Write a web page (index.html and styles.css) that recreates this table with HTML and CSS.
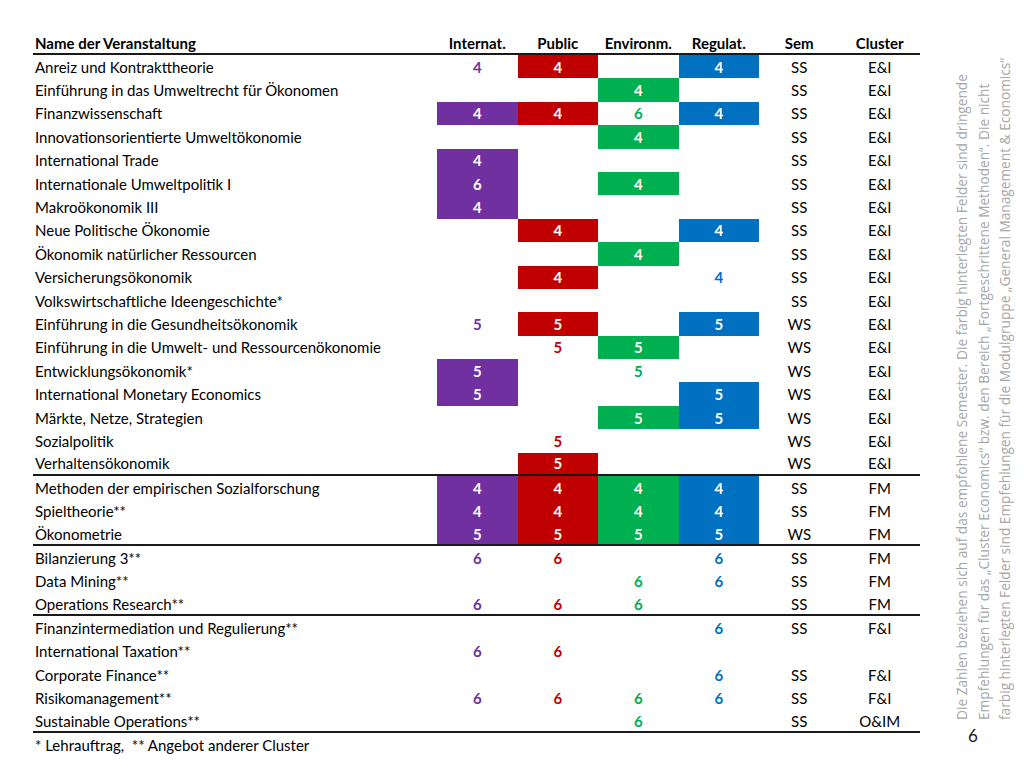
FILE: index.html
```html
<!DOCTYPE html>
<html lang="de">
<head>
<meta charset="utf-8">
<title>Veranstaltungen</title>
<link rel="stylesheet" href="styles.css">
</head>
<body>
<div class="slide">
  <div class="main">
    <div class="table">
      <div class="row head">
        <div class="name">Name der Veranstaltung</div>
        <div class="c">Internat.</div><div class="c">Public</div><div class="c">Environm.</div><div class="c">Regulat.</div><div class="c">Sem</div><div class="c">Cluster</div>
      </div>
      <div class="row"><div class="name">Anreiz und Kontrakttheorie</div><div class="c n i">4</div><div class="c n p f">4</div><div class="c"></div><div class="c n r f">4</div><div class="c">SS</div><div class="c">E&amp;I</div></div>
      <div class="row"><div class="name">Einführung in das Umweltrecht für Ökonomen</div><div class="c"></div><div class="c"></div><div class="c n e f">4</div><div class="c"></div><div class="c">SS</div><div class="c">E&amp;I</div></div>
      <div class="row"><div class="name">Finanzwissenschaft</div><div class="c n i f">4</div><div class="c n p f">4</div><div class="c n e">6</div><div class="c n r f">4</div><div class="c">SS</div><div class="c">E&amp;I</div></div>
      <div class="row"><div class="name">Innovationsorientierte Umweltökonomie</div><div class="c"></div><div class="c"></div><div class="c n e f">4</div><div class="c"></div><div class="c">SS</div><div class="c">E&amp;I</div></div>
      <div class="row"><div class="name">International Trade</div><div class="c n i f">4</div><div class="c"></div><div class="c"></div><div class="c"></div><div class="c">SS</div><div class="c">E&amp;I</div></div>
      <div class="row"><div class="name">Internationale Umweltpolitik I</div><div class="c n i f">6</div><div class="c"></div><div class="c n e f">4</div><div class="c"></div><div class="c">SS</div><div class="c">E&amp;I</div></div>
      <div class="row"><div class="name">Makroökonomik III</div><div class="c n i f">4</div><div class="c"></div><div class="c"></div><div class="c"></div><div class="c">SS</div><div class="c">E&amp;I</div></div>
      <div class="row"><div class="name">Neue Politische Ökonomie</div><div class="c"></div><div class="c n p f">4</div><div class="c"></div><div class="c n r f">4</div><div class="c">SS</div><div class="c">E&amp;I</div></div>
      <div class="row"><div class="name">Ökonomik natürlicher Ressourcen</div><div class="c"></div><div class="c"></div><div class="c n e f">4</div><div class="c"></div><div class="c">SS</div><div class="c">E&amp;I</div></div>
      <div class="row"><div class="name">Versicherungsökonomik</div><div class="c"></div><div class="c n p f">4</div><div class="c"></div><div class="c n r">4</div><div class="c">SS</div><div class="c">E&amp;I</div></div>
      <div class="row"><div class="name">Volkswirtschaftliche Ideengeschichte*</div><div class="c"></div><div class="c"></div><div class="c"></div><div class="c"></div><div class="c">SS</div><div class="c">E&amp;I</div></div>
      <div class="row"><div class="name">Einführung in die Gesundheitsökonomik</div><div class="c n i">5</div><div class="c n p f">5</div><div class="c"></div><div class="c n r f">5</div><div class="c">WS</div><div class="c">E&amp;I</div></div>
      <div class="row"><div class="name">Einführung in die Umwelt- und Ressourcenökonomie</div><div class="c"></div><div class="c n p">5</div><div class="c n e f">5</div><div class="c"></div><div class="c">WS</div><div class="c">E&amp;I</div></div>
      <div class="row"><div class="name">Entwicklungsökonomik*</div><div class="c n i f">5</div><div class="c"></div><div class="c n e">5</div><div class="c"></div><div class="c">WS</div><div class="c">E&amp;I</div></div>
      <div class="row"><div class="name">International Monetary Economics</div><div class="c n i f">5</div><div class="c"></div><div class="c"></div><div class="c n r f">5</div><div class="c">WS</div><div class="c">E&amp;I</div></div>
      <div class="row"><div class="name">Märkte, Netze, Strategien</div><div class="c"></div><div class="c"></div><div class="c n e f">5</div><div class="c n r f">5</div><div class="c">WS</div><div class="c">E&amp;I</div></div>
      <div class="row"><div class="name">Sozialpolitik</div><div class="c"></div><div class="c n p">5</div><div class="c"></div><div class="c"></div><div class="c">WS</div><div class="c">E&amp;I</div></div>
      <div class="row sep"><div class="name">Verhaltensökonomik</div><div class="c"></div><div class="c n p f">5</div><div class="c"></div><div class="c"></div><div class="c">WS</div><div class="c">E&amp;I</div></div>
      <div class="row"><div class="name">Methoden der empirischen Sozialforschung</div><div class="c n i f">4</div><div class="c n p f">4</div><div class="c n e f">4</div><div class="c n r f">4</div><div class="c">SS</div><div class="c">FM</div></div>
      <div class="row"><div class="name">Spieltheorie**</div><div class="c n i f">4</div><div class="c n p f">4</div><div class="c n e f">4</div><div class="c n r f">4</div><div class="c">SS</div><div class="c">FM</div></div>
      <div class="row sep"><div class="name">Ökonometrie</div><div class="c n i f">5</div><div class="c n p f">5</div><div class="c n e f">5</div><div class="c n r f">5</div><div class="c">WS</div><div class="c">FM</div></div>
      <div class="row"><div class="name">Bilanzierung 3**</div><div class="c n i">6</div><div class="c n p">6</div><div class="c"></div><div class="c n r">6</div><div class="c">SS</div><div class="c">FM</div></div>
      <div class="row"><div class="name">Data Mining**</div><div class="c"></div><div class="c"></div><div class="c n e">6</div><div class="c n r">6</div><div class="c">SS</div><div class="c">FM</div></div>
      <div class="row sep"><div class="name">Operations Research**</div><div class="c n i">6</div><div class="c n p">6</div><div class="c n e">6</div><div class="c"></div><div class="c">SS</div><div class="c">FM</div></div>
      <div class="row"><div class="name">Finanzintermediation und Regulierung**</div><div class="c"></div><div class="c"></div><div class="c"></div><div class="c n r">6</div><div class="c">SS</div><div class="c">F&amp;I</div></div>
      <div class="row"><div class="name">International Taxation**</div><div class="c n i">6</div><div class="c n p">6</div><div class="c"></div><div class="c"></div><div class="c"></div><div class="c"></div></div>
      <div class="row"><div class="name">Corporate Finance**</div><div class="c"></div><div class="c"></div><div class="c"></div><div class="c n r">6</div><div class="c">SS</div><div class="c">F&amp;I</div></div>
      <div class="row"><div class="name">Risikomanagement**</div><div class="c n i">6</div><div class="c n p">6</div><div class="c n e">6</div><div class="c n r">6</div><div class="c">SS</div><div class="c">F&amp;I</div></div>
      <div class="row sep"><div class="name">Sustainable Operations**</div><div class="c"></div><div class="c"></div><div class="c n e">6</div><div class="c"></div><div class="c">SS</div><div class="c">O&amp;IM</div></div>
    </div>
    <div class="foot">* Lehrauftrag,  ** Angebot anderer Cluster</div>
  </div>
  <aside class="side">
    <p class="note">Die Zahlen beziehen sich auf das empfohlene Semester. Die farbig hinterlegten  Felder sind dringende<br>Empfehlungen für das „Cluster Economics“ bzw. den Bereich „Fortgeschrittene Methoden“. Die nicht<br>farbig hinterlegten Felder sind Empfehlungen für die Modulgruppe „General Management &amp; Economics“</p>
    <div class="page">6</div>
  </aside>
</div>
</body>
</html>
```

FILE: styles.css
```css
html, body {
  margin: 0;
  padding: 0;
  background: #ffffff;
}

.slide {
  width: 1024px;
  height: 768px;
  display: flex;
  overflow: hidden;
  font-family: "Lato", "Liberation Sans", sans-serif;
  color: #000;
}

.main {
  padding: 32px 0 0 33px;
  width: 887px;
  flex: none;
}

.table {
  display: flex;
  flex-direction: column;
}

.row {
  display: grid;
  grid-template-columns: 404px repeat(6, 80.5px);
  height: 23.4px;
  box-sizing: border-box;
  font-size: 15px;
  font-weight: 400;
}

.row.head {
  height: 23px;
  font-weight: 700;
  border-bottom: 2px solid #1a1a1a;
}

.row.sep {
  border-bottom: 2px solid #1a1a1a;
}

.name {
  display: flex;
  align-items: center;
  padding-left: 2px;
  white-space: nowrap;
}

.c {
  display: flex;
  align-items: center;
  justify-content: center;
  white-space: nowrap;
}

.n { font-weight: 700; }

.i { color: #7030a0; }
.p { color: #c00000; }
.e { color: #00b050; }
.r { color: #0070c0; }

.f { color: #ffffff; }
.i.f { background: #7030a0; }
.p.f { background: #c00000; }
.e.f { background: #00b050; }
.r.f { background: #0070c0; }

.foot {
  height: 23.4px;
  display: flex;
  align-items: center;
  padding-left: 2px;
  font-size: 15px;
  white-space: pre;
}

.side {
  flex: none;
  margin-left: 31px;
  padding-top: 28px;
  display: flex;
  flex-direction: column;
}

.note {
  margin: 0;
  height: 692px;
  writing-mode: vertical-rl;
  transform: rotate(180deg);
  font-family: "Open Sans", "Noto Sans", sans-serif;
  font-size: 13.7px;
  line-height: 21.5px;
  color: #a6a6a6;
  white-space: nowrap;
}

.page {
  margin-top: 6px;
  padding-left: 17px;
  font-size: 17px;
  line-height: 20px;
  color: #1a1a1a;
}
```
